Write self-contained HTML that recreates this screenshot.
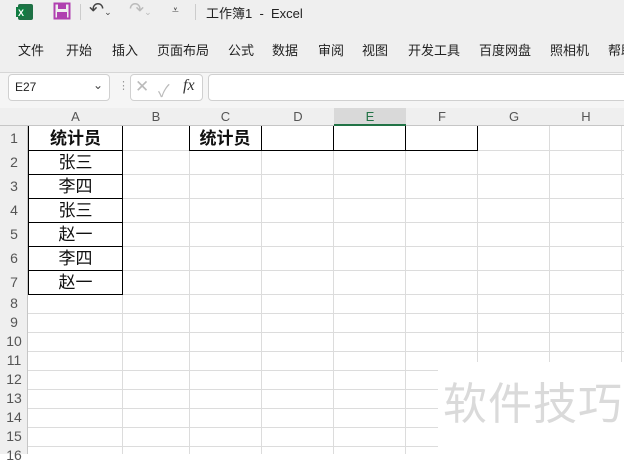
<!DOCTYPE html>
<html><head><meta charset="utf-8"><style>
*{margin:0;padding:0;box-sizing:border-box}
body{width:624px;height:454px;overflow:hidden;background:#fff;font-family:"Liberation Sans","Noto Sans CJK SC",sans-serif;position:relative}
.a{position:absolute;white-space:nowrap}
.top{left:0;top:0;width:624px;height:73px;background:#efefef;border-bottom:1px solid #d6d6d6}
.tab{top:40px;font-size:13px;color:#222}
.fb{left:0;top:73px;width:624px;height:35px;background:#f5f5f5}
.box{background:#fff;border:1px solid #d0d0d0;border-radius:4px}
.ch{top:108px;height:18px;background:#efefef;border-bottom:1px solid #c6c6c6;font-size:13px;color:#555;text-align:center;line-height:18px}
.rh{left:0;width:28px;background:#efefef;border-right:1px solid #c6c6c6;font-size:13px;color:#555;text-align:center}
.hl{height:1px;background:#dcdcdc;left:28px;width:596px}
.vl{width:1px;background:#dcdcdc;top:126px;height:328px}
.c{font-size:17px;text-align:center;color:#111;line-height:23px}
</style></head><body>
<div class="a top"></div>
<svg class="a" style="left:16px;top:3px" width="18" height="18"><rect x="2" y="1" width="15" height="16" rx="2" fill="#1e7145"/><rect x="0" y="4" width="10" height="10" fill="#107c41"/><text x="2" y="13" font-size="9" fill="#fff" font-family="Liberation Sans" font-weight="bold">X</text></svg>
<svg class="a" style="left:53px;top:2px" width="18" height="18"><rect x="1.5" y="1.5" width="15" height="15" fill="none" stroke="#b040b0" stroke-width="2"/><rect x="5" y="2" width="8" height="5" fill="#b040b0"/><rect x="4" y="10" width="10" height="6" fill="#b040b0"/></svg>
<div class="a" style="left:80px;top:4px;width:1px;height:16px;background:#ccc"></div>
<div class="a" style="left:89px;top:-1px;font-size:18px;color:#444">↶<span style="font-size:9px">⌄</span></div>
<div class="a" style="left:129px;top:-1px;font-size:18px;color:#bbb">↷<span style="font-size:9px">⌄</span></div>
<div class="a" style="left:172px;top:3px;font-size:12px;color:#444">⩡</div>
<div class="a" style="left:195px;top:4px;width:1px;height:16px;background:#ccc"></div>
<div class="a" style="left:206px;top:3px;font-size:13px;color:#222">工作簿1 &nbsp;- &nbsp;Excel</div>
<div class="a tab" style="left:18px">文件</div>
<div class="a tab" style="left:66px">开始</div>
<div class="a tab" style="left:112px">插入</div>
<div class="a tab" style="left:157px">页面布局</div>
<div class="a tab" style="left:228px">公式</div>
<div class="a tab" style="left:272px">数据</div>
<div class="a tab" style="left:318px">审阅</div>
<div class="a tab" style="left:362px">视图</div>
<div class="a tab" style="left:408px">开发工具</div>
<div class="a tab" style="left:479px">百度网盘</div>
<div class="a tab" style="left:550px">照相机</div>
<div class="a tab" style="left:608px">帮助</div>
<div class="a fb"></div>
<div class="a box" style="left:8px;top:74px;width:102px;height:27px"></div>
<div class="a" style="left:15px;top:80px;font-size:12px;color:#222">E27</div>
<div class="a" style="left:93px;top:78px;font-size:12px;color:#444">⌄</div>
<div class="a" style="left:118px;top:79px;font-size:11px;color:#999">⋮</div>
<div class="a box" style="left:130px;top:74px;width:73px;height:27px"></div>
<div class="a" style="left:135px;top:77px;font-size:17px;color:#bbb">✕</div>
<div class="a" style="left:158px;top:77px;font-size:17px;color:#bbb">✓</div>
<div class="a" style="left:183px;top:77px;font-size:16px;font-style:italic;font-family:'Liberation Serif',serif;color:#333">fx</div>
<div class="a box" style="left:208px;top:74px;width:430px;height:27px"></div>
<div class="a ch" style="left:0;width:624px"></div>
<div class="a" style="left:334px;top:108px;width:72px;height:18px;background:#d9d9d9;border-bottom:2px solid #217346"></div>
<div class="a ch" style="left:28px;width:95px;background:none;border:none">A</div>
<div class="a ch" style="left:123px;width:66px;background:none;border:none">B</div>
<div class="a ch" style="left:189px;width:73px;background:none;border:none">C</div>
<div class="a ch" style="left:262px;width:72px;background:none;border:none">D</div>
<div class="a ch" style="left:334px;width:72px;background:none;border:none;color:#217346">E</div>
<div class="a ch" style="left:406px;width:72px;background:none;border:none">F</div>
<div class="a ch" style="left:478px;width:72px;background:none;border:none">G</div>
<div class="a ch" style="left:550px;width:72px;background:none;border:none">H</div>
<div class="a rh" style="top:126px;height:328px"></div>
<div class="a vl" style="left:122px"></div><div class="a vl" style="left:189px"></div><div class="a vl" style="left:261px"></div><div class="a vl" style="left:333px"></div><div class="a vl" style="left:405px"></div><div class="a vl" style="left:477px"></div><div class="a vl" style="left:549px"></div><div class="a vl" style="left:621px"></div>
<div class="a hl" style="top:150px"></div><div class="a hl" style="top:174px"></div><div class="a hl" style="top:198px"></div><div class="a hl" style="top:222px"></div><div class="a hl" style="top:246px"></div><div class="a hl" style="top:270px"></div><div class="a hl" style="top:294px"></div><div class="a hl" style="top:313px"></div><div class="a hl" style="top:332px"></div><div class="a hl" style="top:351px"></div><div class="a hl" style="top:370px"></div><div class="a hl" style="top:389px"></div><div class="a hl" style="top:408px"></div><div class="a hl" style="top:427px"></div><div class="a hl" style="top:446px"></div>
<div class="a" style="left:0;top:126px;width:28px;font-size:14px;color:#555;text-align:center;line-height:24px">1<br>2<br>3<br>4<br>5<br>6<br>7</div>
<div class="a" style="left:0;top:294px;width:28px;font-size:14px;color:#555;text-align:center;line-height:19px">8<br>9<br>10<br>11<br>12<br>13<br>14<br>15<br>16</div>
<div class="a" style="left:28px;top:126px;width:95px;height:169px;border:1px solid #000;border-top:none"></div>
<div class="a" style="left:28px;top:150px;width:95px;height:1px;background:#000"></div><div class="a" style="left:28px;top:174px;width:95px;height:1px;background:#000"></div><div class="a" style="left:28px;top:198px;width:95px;height:1px;background:#000"></div><div class="a" style="left:28px;top:222px;width:95px;height:1px;background:#000"></div><div class="a" style="left:28px;top:246px;width:95px;height:1px;background:#000"></div><div class="a" style="left:28px;top:270px;width:95px;height:1px;background:#000"></div>
<div class="a" style="left:189px;top:126px;width:289px;height:25px;border:1px solid #000;border-top:none"></div>
<div class="a" style="left:261px;top:126px;width:1px;height:24px;background:#000"></div>
<div class="a" style="left:333px;top:126px;width:1px;height:24px;background:#000"></div>
<div class="a" style="left:405px;top:126px;width:1px;height:24px;background:#000"></div>
<div class="a c" style="left:28px;top:127px;width:95px;font-weight:bold">统计员</div>
<div class="a c" style="left:28px;top:151px;width:95px">张三</div>
<div class="a c" style="left:28px;top:175px;width:95px">李四</div>
<div class="a c" style="left:28px;top:199px;width:95px">张三</div>
<div class="a c" style="left:28px;top:223px;width:95px">赵一</div>
<div class="a c" style="left:28px;top:247px;width:95px">李四</div>
<div class="a c" style="left:28px;top:271px;width:95px">赵一</div>
<div class="a c" style="left:189px;top:127px;width:72px;font-weight:bold">统计员</div>
<div class="a" style="left:438px;top:362px;width:186px;height:92px;background:#fff"></div>
<div class="a" style="left:443px;top:378px;font-size:44px;color:#dadada;letter-spacing:1px;line-height:54px">软件技巧</div>
</body></html>
